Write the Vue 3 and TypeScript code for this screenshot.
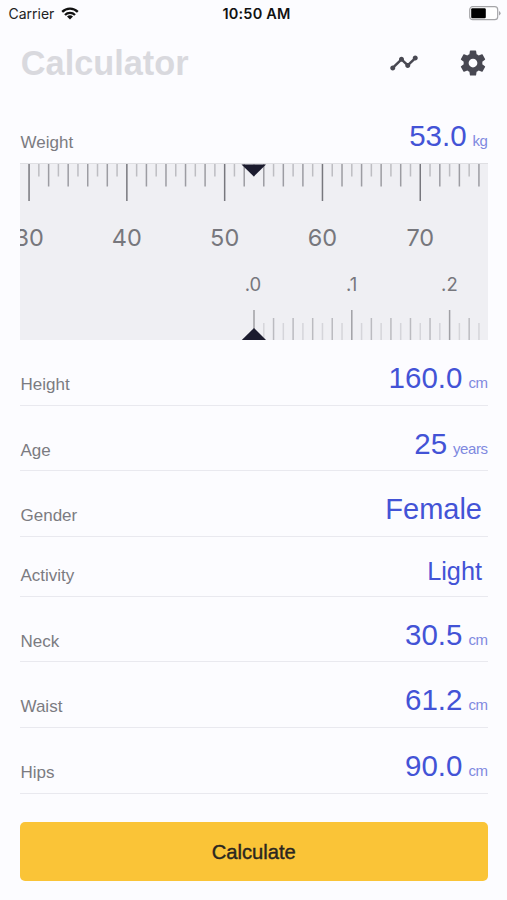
<script setup lang="ts">
import { computed, ref } from 'vue'

interface Measure {
  label: string
  value: string
  unit?: string
  compact?: boolean
}

interface Tick {
  x: number
  kind: 'major' | 'mid' | 'minor'
}

const weight = ref(53)

const measures: Measure[] = [
  { label: 'Height', value: '160.0', unit: 'cm' },
  { label: 'Age', value: '25', unit: 'years' },
  { label: 'Gender', value: 'Female' },
  { label: 'Activity', value: 'Light', compact: true },
  { label: 'Neck', value: '30.5', unit: 'cm' },
  { label: 'Waist', value: '61.2', unit: 'cm' },
  { label: 'Hips', value: '90.0', unit: 'cm' },
]

const STEP = 9.78
const CENTER = 234

function ticks(start: number, count: number): Tick[] {
  return Array.from({ length: count }, (_, i) => ({
    x: start + i * STEP,
    kind: i % 10 === 0 ? 'major' : i % 2 === 0 ? 'mid' : 'minor',
  }))
}

const wholeStart = computed(() => CENTER - (weight.value - 30) * STEP)
const wholeTicks = computed(() => ticks(wholeStart.value, 47))
const wholeLabels = computed(() =>
  [30, 40, 50, 60, 70].map((n, i) => ({ text: String(n), x: wholeStart.value + i * 10 * STEP })),
)
const fineTicks = ticks(CENTER, 24)
const fineLabels = ['.0', '.1', '.2'].map((text, i) => ({ text, x: CENTER - 1 + i * 10 * STEP + (i ? 0.8 : 0) }))

const wholeLength = { major: 38, mid: 23.5, minor: 13.5 }
const fineLength = { major: 30, mid: 22, minor: 17 }
</script>

<template>
  <main class="screen">
    <div class="status">
      <div class="carrier">
        <span>Carrier</span>
        <svg width="18" height="13" viewBox="0 0 18 13">
          <g fill="none" stroke="#111" stroke-width="2.3">
            <path d="M1.2 4.9a11 11 0 0 1 15.6 0" />
            <path d="M4 8a7 7 0 0 1 10 0" />
          </g>
          <path d="M9 12.6 6 9.6a4.3 4.3 0 0 1 6 0z" fill="#111" />
        </svg>
      </div>
      <span class="time">10:50 AM</span>
      <svg class="battery" width="32" height="15" viewBox="0 0 32 15">
        <rect x="0.7" y="0.7" width="28" height="13" rx="3" fill="#fff" stroke="#a5a5a8" stroke-width="1.2" />
        <rect x="2.2" y="2.2" width="14.6" height="10" rx="1.2" fill="#000" />
        <path d="M30 5v4.4q1.6-.7 1.6-2.2T30 5z" fill="#a5a5a8" />
      </svg>
    </div>

    <header class="header">
      <h1>Calculator</h1>
      <div class="actions">
        <svg width="30" height="30" viewBox="0 0 24 24" fill="#484852">
          <path d="M23 8c0 1.100-.9 2-2 2-.18 0-.35-.02-.51-.07l-3.560 3.550c.05.160.07.340.07.520 0 1.100-.9 2-2 2s-2-.9-2-2c0-.18.02-.36.07-.52l-2.550-2.550c-.16.050-.34.070-.52.070s-.36-.02-.52-.07l-4.550 4.560c.05.160.07.330.07.510 0 1.100-.9 2-2 2s-2-.9-2-2 .9-2 2-2c.18 0 .35.020.51.070l4.560-4.550C8.020 9.360 8 9.180 8 9c0-1.100.9-2 2-2s2 .9 2 2c0 .18-.02.36-.07.520l2.550 2.550c.16-.05.34-.07.520-.07s.36.020.52.070l3.550-3.560C19.020 8.350 19 8.180 19 8c0-1.100.9-2 2-2s2 .9 2 2z" />
        </svg>
        <svg width="30" height="30" viewBox="0 0 24 24" fill="#484852">
          <path d="M19.430 12.980c.04-.32.070-.64.070-.98s-.03-.66-.07-.98l2.110-1.650c.19-.15.240-.42.120-.64l-2-3.460c-.12-.22-.39-.3-.61-.22l-2.490 1c-.52-.4-1.080-.73-1.690-.98l-.38-2.650C14.460 2.180 14.250 2 14 2h-4c-.25 0-.46.180-.49.420l-.38 2.650c-.61.250-1.170.590-1.690.980l-2.490-1c-.23-.09-.49 0-.61.220l-2 3.460c-.13.220-.07.490.120.640l2.110 1.650c-.04.320-.07.650-.07.980s.03.660.07.980l-2.110 1.650c-.19.150-.24.420-.12.640l2 3.460c.12.220.39.300.61.220l2.490-1c.52.400 1.080.730 1.690.980l.38 2.650c.03.240.24.420.49.420h4c.25 0 .46-.18.490-.42l.38-2.650c.61-.25 1.170-.59 1.690-.98l2.490 1c.23.090.49 0 .61-.22l2-3.460c.12-.22.070-.49-.12-.64l-2.110-1.650zM12 15.500c-1.930 0-3.500-1.570-3.500-3.500s1.570-3.500 3.500-3.500 3.500 1.570 3.500 3.500-1.570 3.500-3.500 3.500z" />
        </svg>
      </div>
    </header>

    <section class="row weight">
      <span class="label">Weight</span>
      <span class="reading">
        <span class="value">{{ weight.toFixed(1) }}</span>
        <span class="unit">kg</span>
      </span>
    </section>

    <svg class="ruler" width="467.5" height="177" viewBox="0 0 467.5 177">
      <line
        v-for="(t, i) in wholeTicks"
        :key="'w' + i"
        :class="['tick', t.kind]"
        :x1="t.x"
        :x2="t.x"
        y1="0"
        :y2="wholeLength[t.kind]"
      />
      <line class="edge" x1="0" x2="468" y1="0.5" y2="0.5" />
      <text v-for="l in wholeLabels" :key="l.text" class="whole" :x="l.x" y="83.400">{{ l.text }}</text>
      <text v-for="l in fineLabels" :key="l.text" class="fine" :x="l.x" y="128">{{ l.text }}</text>
      <g class="fine-ticks">
        <line
          v-for="(t, i) in fineTicks"
          :key="'f' + i"
          :class="['tick', t.kind]"
          :x1="t.x"
          :x2="t.x"
          :y1="177 - fineLength[t.kind]"
          y2="177"
        />
      </g>
      <path class="pointer" d="M221.500 1.500h24.500L233.800 13.500z" />
      <path class="pointer" d="M221.800 177h24.200L234 165z" />
    </svg>

    <section v-for="m in measures" :key="m.label" class="row" :class="{ compact: m.compact }">
      <span class="label">{{ m.label }}</span>
      <span class="reading" :class="{ plain: !m.unit }">
        <span class="value">{{ m.value }}</span>
        <span v-if="m.unit" class="unit">{{ m.unit }}</span>
      </span>
    </section>

    <button class="calculate" type="button">Calculate</button>
  </main>
</template>

<style>
body {
  background: #fcfcff;
}
</style>

<style scoped>
.screen {
  box-sizing: border-box;
  width: 507px;
  height: 900px;
  padding: 0 19.5px 0 20px;
  display: flex;
  flex-direction: column;
  background: #fcfcff;
  font-family: "Liberation Sans", Arial, sans-serif;
  overflow: hidden;
}
.status {
  display: grid;
  grid-template-columns: 1fr auto 1fr;
  align-items: center;
  height: 27px;
  margin: 0 -13px 0 -11.500px;
  flex: none;
  font-family: Inter, sans-serif;
  font-size: 14px;
  color: #222;
}
.carrier {
  display: flex;
  align-items: center;
  gap: 7px;
}
.time {
  padding-left: 4px;
  font-weight: 600;
  font-size: 14.5px;
  letter-spacing: 0.2px;
  color: #111;
}
.battery {
  justify-self: end;
}
.header {
  display: flex;
  align-items: center;
  justify-content: space-between;
  height: 72px;
  flex: none;
}
h1 {
  margin: 0;
  padding-left: 0.8px;
  font-size: 34.3px;
  line-height: 40px;
  font-weight: 700;
  color: #d9d9de;
}
.actions {
  display: flex;
  gap: 38.500px;
}
.row {
  box-sizing: border-box;
  height: 65.6px;
  flex: none;
  display: flex;
  justify-content: space-between;
  align-items: flex-end;
  padding-bottom: 9.6px;
  border-bottom: 1.500px solid #e9e9ef;
}
.row.compact {
  height: 60px;
}
.row.weight {
  height: 64px;
  border: 0;
}
.label {
  padding-left: 0.5px;
  font-size: 17px;
  line-height: 20px;
  color: #7b7b81;
}
.reading {
  display: flex;
  align-items: baseline;
  gap: 6px;
  color: #4353d6;
  margin-bottom: 1px;
}
.plain {
  padding-right: 5.500px;
}
.plain .value {
  font-size: 29px;
}
.value {
  font-size: 29.500px;
  line-height: 32px;
}
.compact .reading {
  margin-bottom: 0;
}
.compact .value {
  font-size: 25.300px;
  line-height: 30px;
}
.unit {
  font-size: 15px;
  line-height: 18px;
  letter-spacing: -0.45px;
  color: #7f89e0;
}
.ruler {
  display: block;
  flex: none;
  background: #efeff3;
}
.edge {
  stroke: #dfdfe3;
}
.tick {
  stroke-width: 1.500;
}
.major {
  stroke: #77777d;
}
.mid {
  stroke: #9c9ca2;
}
.minor {
  stroke: #bdbdc2;
}
.fine-ticks .major {
  stroke: #a0a0a5;
}
.fine-ticks .mid {
  stroke: #bbbbc0;
}
.fine-ticks .minor {
  stroke: #d5d5da;
}
.whole,
.fine {
  font-family: Inter, sans-serif;
  text-anchor: middle;
  fill: #77777d;
}
.whole {
  font-size: 23.500px;
}
.fine {
  font-size: 18.500px;
}
.pointer {
  fill: #1b1b2e;
}
.calculate {
  margin-top: 28.500px;
  padding: 1.500px 0 0;
  height: 58.500px;
  flex: none;
  border: 0;
  border-radius: 5px;
  background: #fac437;
  color: #2a2620;
  font-family: inherit;
  font-size: 20.200px;
  -webkit-text-stroke: 0.4px #2a2620;
}
</style>
